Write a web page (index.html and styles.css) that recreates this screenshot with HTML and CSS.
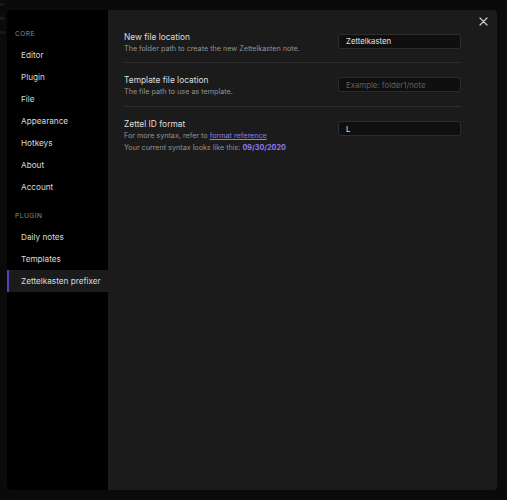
FILE: index.html
```html
<!DOCTYPE html>
<html>
<head>
<meta charset="utf-8">
<link rel="stylesheet" href="styles.css">
</head>
<body>
<div class="backdrop">
  <span class="bg-line">er</span>
  <span class="bg-line">te</span>
  <span class="bg-line">as</span>
</div>
<div class="modal">
  <nav class="sidebar">
    <div class="group-title">Core</div>
    <div class="nav-item">Editor</div>
    <div class="nav-item">Plugin</div>
    <div class="nav-item">File</div>
    <div class="nav-item">Appearance</div>
    <div class="nav-item">Hotkeys</div>
    <div class="nav-item">About</div>
    <div class="nav-item">Account</div>
    <div class="group-title group-gap">Plugin</div>
    <div class="nav-item">Daily notes</div>
    <div class="nav-item">Templates</div>
    <div class="nav-item active">Zettelkasten prefixer</div>
  </nav>
  <main class="content">
    <div class="close" aria-label="Close">
      <svg width="9" height="9" viewBox="0 0 9 9"><path d="M1 1L8 8M8 1L1 8" stroke="#c8c8c8" stroke-width="1.3" stroke-linecap="round"/></svg>
    </div>
    <div class="setting">
      <div class="info">
        <div class="name">New file location</div>
        <div class="desc">The folder path to create the new Zettelkasten note.</div>
      </div>
      <input class="field" type="text" value="Zettelkasten">
    </div>
    <div class="setting">
      <div class="info">
        <div class="name">Template file location</div>
        <div class="desc">The file path to use as template.</div>
      </div>
      <input class="field" type="text" placeholder="Example: folder1/note">
    </div>
    <div class="setting">
      <div class="info">
        <div class="name">Zettel ID format</div>
        <div class="desc">For more syntax, refer to <a class="link" href="#">format reference</a></div>
        <div class="desc">Your current syntax looks like this: <b class="accent">09/30/2020</b></div>
      </div>
      <input class="field" type="text" value="L">
    </div>
  </main>
</div>
</body>
</html>
```
FILE: styles.css
```css
* { box-sizing: border-box; }
html, body { margin: 0; padding: 0; }
body {
  width: 507px;
  height: 500px;
  background: #0a0a0a;
  font-family: Inter, "Noto Sans", sans-serif;
  color: #dcdcdc;
  position: relative;
  overflow: hidden;
  padding: 10px 10px 0 7px;
}
.backdrop {
  position: absolute;
  left: 0;
  top: 0;
  display: flex;
  flex-direction: column;
  gap: 6px;
  font-size: 5px;
  line-height: 8px;
  color: #2c2c2c;
}
.bg-line { display: block; white-space: nowrap; }
.modal {
  position: relative;
  display: flex;
  width: 490px;
  height: 480px;
  border-radius: 4px;
  overflow: hidden;
  background: #1b1b1b;
}
.sidebar {
  width: 101px;
  flex: none;
  background: #000;
  padding-top: 18px;
  display: flex;
  flex-direction: column;
}
.group-title {
  text-transform: uppercase;
  font-size: 6.6px;
  letter-spacing: 0.5px;
  color: #8e8e8e;
  line-height: 12px;
  padding-left: 8px;
  margin-bottom: 4px;
}
.group-gap { margin-top: 12px; }
.nav-item {
  height: 22px;
  line-height: 22px;
  font-size: 8.2px;
  color: #dadada;
  padding-left: 14px;
  white-space: nowrap;
}
.nav-item.active {
  background: #1b1b1b;
  border-left: 2px solid #5443b5;
  padding-left: 12px;
}
.content {
  flex: 1;
  position: relative;
  padding: 9px 36px 0 16px;
}
.close {
  position: absolute;
  right: 9px;
  top: 7px;
  width: 9px;
  height: 9px;
  display: flex;
}
.setting {
  display: flex;
  align-items: flex-start;
  justify-content: space-between;
  padding: 11.5px 0 7.9px;
  border-top: 1px solid #2e2e2e;
}
.close + .setting { border-top: none; }
.info { display: flex; flex-direction: column; }
.name {
  font-size: 8.4px;
  line-height: 12px;
  color: #dedede;
}
.desc {
  font-size: 7.2px;
  line-height: 11.5px;
  color: #939393;
}
.link { color: #8a7cf2; text-decoration: underline; }
.accent { color: #8b7bf8; font-weight: 700; }
.field {
  margin-top: 3px;
  width: 123px;
  height: 15px;
  background: #0f0f0f;
  border: 1px solid #2c2c2c;
  border-radius: 3px;
  padding: 0 7px;
  font-family: Inter, "Noto Sans", sans-serif;
  font-size: 7.8px;
  color: #e0e0e0;
  outline: none;
}
.field::placeholder { color: #5e5e5e; }
```
